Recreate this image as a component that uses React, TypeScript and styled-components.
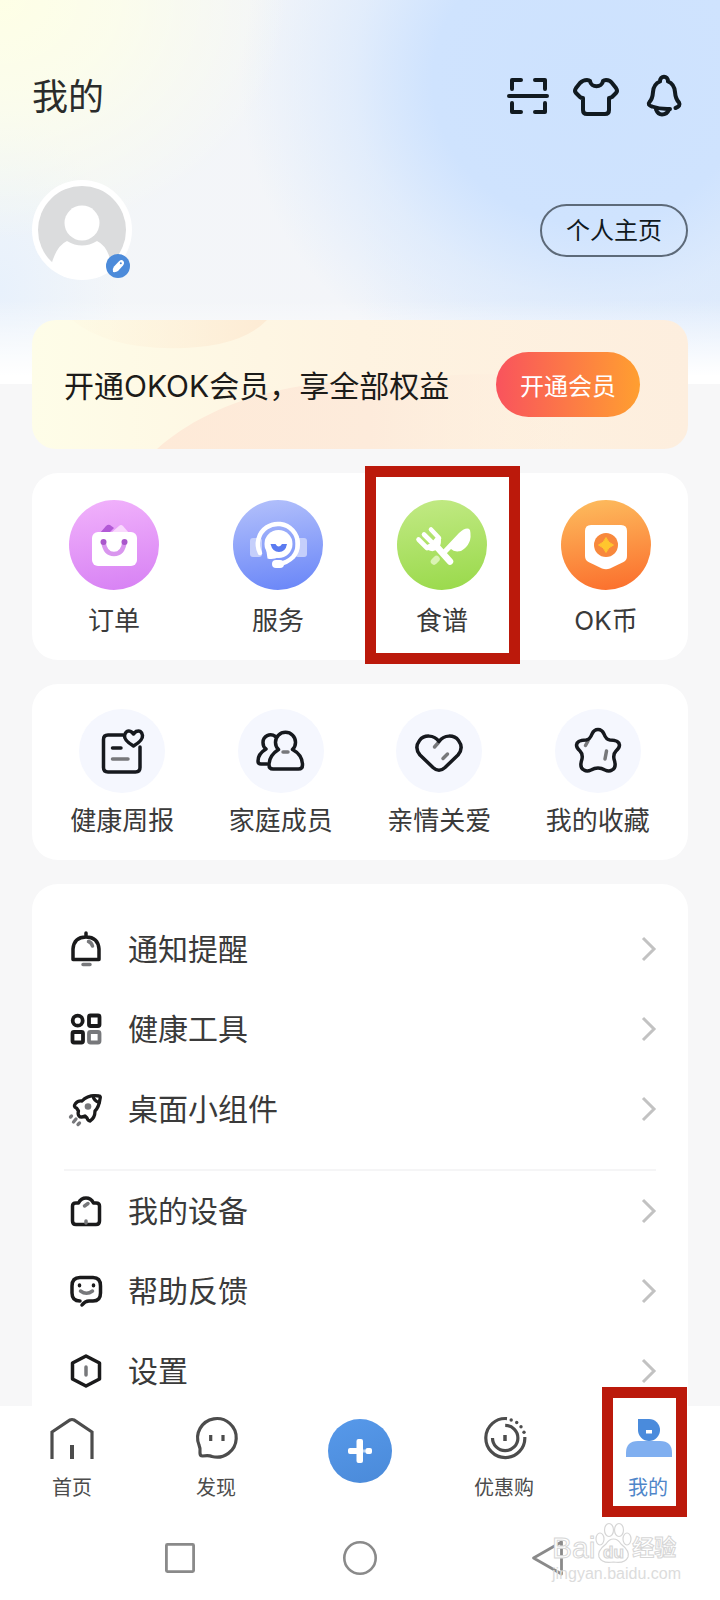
import React from 'react';
import styled, { createGlobalStyle } from 'styled-components';

const GlobalStyle = createGlobalStyle`
  * { box-sizing: border-box; }
  body {
    margin: 0;
    background: #ffffff;
    color: #3a3a3a;
    font-family: Inter, "Noto Sans CJK SC", sans-serif;
    -webkit-font-smoothing: antialiased;
  }
  button { font: inherit; color: inherit; border: 0; padding: 0; background: none; cursor: pointer; }
  a { color: inherit; text-decoration: none; }
  ul { list-style: none; margin: 0; padding: 0; }
  svg { display: block; overflow: visible; }
`;

const Shell = styled.div`
  display: flex;
  flex-direction: column;
  height: 100vh;
  position: relative;
`;

const Main = styled.main`
  flex: 1;
  min-height: 0;
  overflow-y: auto;
  scrollbar-width: none;
  padding: 73px 32px 0;
  background-color: #f7f7f8;
  background-repeat: no-repeat;
  background-size: 100% 384px;
  background-image:
    linear-gradient(to bottom, rgba(255, 255, 255, 0) 300px, #ffffff 376px),
    radial-gradient(ellipse 290px 240px at 0 0, #feffe6 0%, rgba(254, 255, 232, 0.75) 40%, rgba(250, 252, 240, 0) 100%),
    radial-gradient(ellipse 350px 320px at 82% 80px, #cde2fe 0%, #cfe3fe 45%, rgba(216, 232, 253, 0.65) 68%, rgba(240, 245, 251, 0) 100%),
    radial-gradient(ellipse 120px 180px at 0 290px, #e8f1fc 0%, rgba(243, 246, 250, 0) 100%),
    linear-gradient(90deg, #f3f6f8, #f3f5f9 50%, #e3edfb);
`;

const Header = styled.header`
  display: flex;
  align-items: center;
  justify-content: space-between;
`;

const Title = styled.h1`
  margin: 0;
  font-size: 36px;
  line-height: 48px;
  font-weight: 400;
  color: #2a2c2b;
`;

const Actions = styled.div`
  display: flex;
  gap: 20px;
  color: #111a20;
`;

const Profile = styled.section`
  display: flex;
  align-items: center;
  justify-content: space-between;
  margin-top: 59px;
`;

const AvatarButton = styled.button`
  position: relative;
  width: 100px;
  height: 100px;
`;

const EditBadge = styled.span`
  position: absolute;
  right: 2px;
  bottom: 2px;
`;

const OutlineButton = styled.button`
  height: 53px;
  padding: 2px 24px 0;
  border: 2px solid #5d6a79;
  border-radius: 27px;
  font-size: 24px;
  line-height: 36px;
  color: #101820;
`;

const Banner = styled.section`
  position: relative;
  display: flex;
  align-items: center;
  justify-content: space-between;
  margin-top: 40px;
  height: 129px;
  padding: 0 48px 0 32px;
  border-radius: 24px;
  overflow: hidden;
  background: linear-gradient(90deg, #fefde8, #fef3e1 50%, #fdeede);
`;

const BannerArt = styled.svg`
  position: absolute;
  left: 0;
  top: 0;
  width: 100%;
  height: 100%;
`;

const BannerText = styled.p`
  position: relative;
  margin: 0;
  padding-top: 2px;
  font-size: 30px;
  line-height: 40px;
  color: #1c1b19;
  white-space: nowrap;
`;

const JoinButton = styled.button`
  position: relative;
  width: 144px;
  height: 65px;
  border-radius: 33px;
  background: linear-gradient(90deg, #f9535d, #ff9f30);
  color: #ffffff;
  font-size: 24px;
`;

const Card = styled.section`
  margin-top: 24px;
  border-radius: 26px;
  background: #ffffff;
`;

const Grid = styled.ul<{ $side: number }>`
  display: grid;
  grid-template-columns: repeat(4, 1fr);
  padding: 0 ${(p) => p.$side}px;
`;

const GridItem = styled.li`
  position: relative;
`;

const GridLink = styled.a<{ $top: number; $gap: number }>`
  display: flex;
  flex-direction: column;
  align-items: center;
  gap: ${(p) => p.$gap}px;
  padding: ${(p) => p.$top}px 0 21px;
  font-size: 26px;
  line-height: 36px;
  white-space: nowrap;
`;

const SoftDisc = styled.span`
  display: grid;
  place-items: center;
  width: 86px;
  height: 84px;
  border-radius: 50%;
  background: #f5f7fe;
  color: #16191e;
`;

const Marker = styled.span<{ $inset: string }>`
  position: absolute;
  inset: ${(p) => p.$inset};
  border: 11px solid #bb190b;
  pointer-events: none;
`;

const MenuCard = styled(Card)`
  padding: 25px 32px;
`;

const MenuGroup = styled.ul`
  & + & {
    margin-top: 20px;
    border-top: 2px solid #f5f5f6;
  }
`;

const MenuLink = styled.a`
  display: flex;
  align-items: center;
  height: 80px;
  padding-left: 4px;
  font-size: 30px;
  line-height: 40px;
  color: #1a1a1b;
`;

const MenuText = styled.span`
  flex: 1;
  padding-left: 24px;
  color: #3a3a3a;
`;

const TabBar = styled.nav`
  position: relative;
  display: grid;
  grid-template-columns: repeat(5, 1fr);
  height: 110px;
  background: #ffffff;
`;

const TabItem = styled.div`
  position: relative;
  display: flex;
  justify-content: center;
`;

const TabLink = styled.a<{ $active?: boolean }>`
  display: flex;
  flex-direction: column;
  align-items: center;
  gap: 12px;
  padding-top: 8px;
  font-size: 20px;
  line-height: 28px;
  color: ${(p) => (p.$active ? '#4f86c9' : '#4c4c4c')};
`;

const AddButton = styled.button`
  display: grid;
  place-items: center;
  width: 64px;
  height: 64px;
  margin-top: 13px;
  border-radius: 50%;
  background: linear-gradient(160deg, #5799ea, #4a8ad9);
`;

const SystemBar = styled.div`
  display: grid;
  grid-template-columns: repeat(3, 1fr);
  height: 84px;
  padding: 0 12.5%;
  background: #ffffff;
  color: #8a8a8a;
`;

const SystemButton = styled.button`
  display: grid;
  place-items: center;
`;

const Watermark = styled.div`
  position: absolute;
  right: 38px;
  bottom: 16px;
  width: 130px;
  color: #ffffff;
  font-family: "Liberation Sans", "Noto Sans CJK SC", sans-serif;
  pointer-events: none;
`;

const WatermarkBrand = styled.div`
  display: flex;
  align-items: flex-end;
  height: 42px;
  font-size: 30px;
  line-height: 32px;
  white-space: nowrap;
  -webkit-text-stroke: 1px #d6d6d6;
`;

const WatermarkCn = styled.span`
  font-size: 22px;
  font-weight: 700;
`;

const WatermarkSite = styled.div`
  font-size: 16px;
  line-height: 20px;
  color: #dcdcdc;
  white-space: nowrap;
`;

type LineProps = { size?: number; width?: number; children: React.ReactNode };

const Line = ({ size = 48, width = 4, children }: LineProps) => (
  <svg
    width={size}
    height={size}
    viewBox={`0 0 ${size} ${size}`}
    fill="none"
    stroke="currentColor"
    strokeWidth={width}
    strokeLinecap="round"
    strokeLinejoin="round"
    aria-hidden="true"
  >
    {children}
  </svg>
);

const SOFT = '#77787b';

const ScanIcon = () => (
  <Line>
    <path d="M8 16V7h9M31 7h10v9M8 30v9h9M31 39h10v-9M5 23h38" />
  </Line>
);

const ShirtIcon = () => (
  <Line>
    <path d="M18 8C19 15 30 15 31 8Q32 7 34 7Q38 7 40 10L44 15Q46 18 44 20L40 24Q38 25 37 25V37Q37 41 33 41H15Q11 41 11 37V25Q9 25 8 24L4 20Q2 18 4 15L8 10Q11 7 15 7Q17 7 18 8Z" />
  </Line>
);

const BellIcon = () => (
  <Line>
    <path d="M30 36Q20 36.500 12 33.500Q7 32 9.500 29Q12.500 26 13 19C13.500 12.500 16 10 20 8.500C20 2 28 2 28 8.500C32 10 34.500 13 35 19Q35.500 26 39 29.500Q41 33 35.500 35" />
    <path d="M16 36.500Q18 41.500 22 41.500Q27 41.500 29 36.500" />
  </Line>
);

const Avatar = () => (
  <svg width="100" height="100" viewBox="0 0 100 100" aria-hidden="true">
    <circle cx="50" cy="50" r="50" fill="#fff" />
    <circle cx="50" cy="50" r="44" fill="#dbdcdd" />
    <circle cx="50" cy="43" r="17.500" fill="#fff" />
    <path d="M19 86Q24 66 35 61Q50 70 65 61Q76 66 80 86Q66 99 50 99Q33 99 19 86Z" fill="#fff" />
  </svg>
);

const EditIcon = () => (
  <svg width="24" height="24" viewBox="0 0 24 24" aria-hidden="true">
    <circle cx="12" cy="12" r="12" fill="#4c8bda" />
    <path d="M7 18Q6 15 8 12.500L13 7.300Q15.500 5 17.300 7Q19 9 17 11.500L12 17Q10 18.500 7 18Z" fill="#fff" />
    <circle cx="14.800" cy="9.300" r="1" fill="#4c8bda" />
  </svg>
);

type DiscProps = { id: string; from: string; to: string; children: React.ReactNode };

const ColorDisc = ({ id, from, to, children }: DiscProps) => (
  <svg width="90" height="90" viewBox="0 0 90 90" fill="none" aria-hidden="true">
    <defs>
      <linearGradient id={id} x1="0.400" y1="0" x2="0.550" y2="1">
        <stop offset="0" stopColor={from} />
        <stop offset="1" stopColor={to} />
      </linearGradient>
    </defs>
    <circle cx="45" cy="45" r="45" fill={`url(#${id})`} />
    {children}
  </svg>
);

const OrderIcon = () => (
  <ColorDisc id="order" from="#f0b0fb" to="#d883f4">
    <path d="M31 33L37 26Q39 24 41 25L45 28L40 33Z" fill="#b259d6" />
    <path d="M42 33L50 26Q52 24 54 26L60 33Z" fill="#f9d9fd" />
    <rect x="23" y="32" width="45" height="34" rx="6" fill="#fff" />
    <path d="M34.500 42Q36 54 45 54Q54 54 55.500 42" stroke="#d996ee" strokeWidth="4.500" />
    <circle cx="34.500" cy="42" r="3" fill="#a957cb" />
    <circle cx="55.500" cy="42" r="3" fill="#a957cb" />
  </ColorDisc>
);

const ServiceIcon = () => (
  <ColorDisc id="service" from="#b0befb" to="#6c88f8">
    <rect x="17" y="38" width="12" height="19" rx="3" fill="#c5cffb" />
    <rect x="62" y="38" width="12" height="19" rx="3" fill="#c5cffb" />
    <path d="M27 53A20 20 0 1 1 60 57Q54 63 46 64" stroke="#fff" strokeWidth="4.500" strokeLinecap="round" />
    <rect x="39" y="60" width="12" height="8" rx="4" fill="#fff" />
    <circle cx="45.500" cy="44" r="14" fill="#fff" />
    <path d="M33 48L34.500 58.500Q40 60 46 57Z" fill="#fff" />
    <path d="M37.500 44H42.500Q45.500 49 49 44H54Q52.500 52 46 52Q39.500 52 37.500 44Z" fill="#5b7bf0" />
  </ColorDisc>
);

const RecipeIcon = () => (
  <ColorDisc id="recipe" from="#c0e982" to="#9bda4d">
    <path d="M37 61.500L39.500 59" stroke="#daf3b4" strokeWidth="6.500" strokeLinecap="round" />
    <path d="M45 51L62 33Q70 26 73 30Q76 44 64 51Q57 52.500 54 49L48 55Z" fill="#fff" />
    <path d="M21.500 39.500L30 48M27 34.500L35 42.500M34 29.500L42 38" stroke="#fff" strokeWidth="4.600" strokeLinecap="round" />
    <path d="M28 46L34 43L40 36L43.500 37Q45 43 42 48Q37 53 31 50Z" fill="#fff" />
    <path d="M40 47L53 61.500" stroke="#fff" strokeWidth="6.500" strokeLinecap="round" />
  </ColorDisc>
);

const CoinIcon = () => (
  <ColorDisc id="coin" from="#fdb95c" to="#fb712e">
    <path d="M30 25H60Q66 25 66 31V56Q66 60 62.500 62L49 68.500Q45 70 41 68.500L27.500 62Q24 60 24 56V31Q24 25 30 25Z" fill="#fff" />
    <circle cx="45" cy="45" r="12" fill="#f8883c" />
    <path d="M45 37.500Q47 43 52.500 45Q47 47 45 52.500Q43 47 37.500 45Q43 43 45 37.500Z" fill="#ffc62e" stroke="#ffc62e" strokeWidth="1" strokeLinejoin="round" />
  </ColorDisc>
);

const ReportIcon = () => (
  <Line width={3.5}>
    <path d="M25 8H10Q5.500 8 5.500 12.500V40.500Q5.500 45 10 45H37.500Q42 45 42 40.500V20" />
    <path d="M35.500 19Q26 13.500 26.500 8.500Q28 2.500 33 4.500L35.500 7L38 4.500Q43.500 2.500 44.500 8.500Q45 13.500 35.500 19Z" />
    <path d="M14.500 21H23" />
    <path d="M14.500 32H30" stroke={SOFT} />
  </Line>
);

const FamilyIcon = () => (
  <Line width={3.5}>
    <path d="M18.500 9.500C13 5.500 6 9 6 15.500Q6 20 9 22C4 25 1 30 1 34Q1 37 4 37H10" />
    <path d="M21.500 22.500A10 10 0 1 1 35.500 22.500C42 26 45.500 32 45.500 38Q45.500 42 41.500 42H16Q12 42 12 38C12 32 16 26 21.500 22.500Z" />
    <path d="M26 25H31" stroke={SOFT} />
  </Line>
);

const HeartIcon = () => (
  <Line width={3.5}>
    <path d="M23.500 15.500L19.500 20M32.500 27L28 31.500" stroke={SOFT} />
    <path d="M24 14.500C19 7.500 9 7.500 4.500 13.500Q-1 21 5 28L18 40.500Q24 46 30 40.500L43 28Q49 21 43.500 13.500C39 7.500 29 7.500 24 14.500Z" />
  </Line>
);

const StarIcon = () => (
  <Line width={3.5}>
    <path d="M14 14L11.500 18.500M32.500 24L31 32" stroke={SOFT} />
    <path d="M24 2.500Q28 2.500 30 7Q32 12.500 36 13Q45 13 45.500 18Q45.500 21 42 24Q39 27 40 32Q43 41 38 43Q35 45 31 43Q24 39 17 43Q13 45 10 43Q5 41 8 32Q9 27 6 24Q2.500 21 2.500 18Q3 13 12 13Q16 12.500 18 7Q20 2.500 24 2.500Z" />
  </Line>
);

const ReminderIcon = () => (
  <Line size={36} width={3.5}>
    <path d="M5 28.500V18Q6 6 18 6Q30 6 31 18V28.500ZM18 2V5" />
    <path d="M20.500 10.500Q23.500 11.500 24.500 15M15 33.500H22" stroke={SOFT} />
  </Line>
);

const ToolsIcon = () => (
  <Line size={36} width={3.8}>
    <circle cx="9.700" cy="9.700" r="5" />
    <rect x="21" y="4.500" width="10.500" height="10.500" rx="1.500" />
    <rect x="4.500" y="21" width="10.500" height="10.500" rx="1.500" />
    <rect x="21" y="21" width="10.500" height="10.500" rx="1.500" stroke={SOFT} />
  </Line>
);

const RocketIcon = () => (
  <Line size={36} width={3.3}>
    <path d="M31 5Q33 5 32 8Q31 16 27 20Q27 27 22 30Q20 30 19 27L17 25Q13 27 11 25Q9.500 23 10.500 20L8.500 17Q5 16 7.500 12.500Q10 9.500 14 10Q20 3.500 31 5Z" />
    <path d="M25 5Q26 10 31 11.500" />
    <circle cx="20" cy="15.500" r="3.300" fill={SOFT} stroke="none" />
    <path d="M2.500 26L3.500 25M5.500 31L8 28M10 33.500L11.500 32" stroke={SOFT} />
  </Line>
);

const DeviceIcon = () => (
  <Line size={36} width={3.5}>
    <path d="M10.500 10H8Q4.500 10 4.500 13V28Q4.500 31.500 8 31.500H28Q31.500 31.500 31.500 28V13Q31.500 10 28 10H25.500Q23 5 18 5Q13 5 10.500 10Z" />
    <path d="M16.500 13L20 10.500M18 28V30" stroke={SOFT} />
  </Line>
);

const FeedbackIcon = () => (
  <Line size={36} width={3.5}>
    <path d="M12 28Q4 28 4 20V13Q4 4.500 12 4.500H25Q32.500 4.500 32.500 13V20Q32.500 28 25 28H21Q17 28 14 32" />
    <path d="M11.500 12V12.800M25.500 12V12.800" />
    <path d="M12.500 18Q18.500 22.500 24.500 18" stroke={SOFT} />
  </Line>
);

const SettingsIcon = () => (
  <Line size={36} width={3.5}>
    <path d="M18 3L31.500 10V26L18 33L4.500 26V10Z" />
    <path d="M18 14V22" stroke={SOFT} />
  </Line>
);

const Chevron = () => (
  <svg width="16" height="24" viewBox="0 0 16 24" fill="none" stroke="#c2c2c2" strokeWidth="3" aria-hidden="true">
    <path d="M3 1L14 12L3 23" />
  </svg>
);

const HomeTabIcon = () => (
  <svg width="48" height="48" viewBox="0 0 48 48" fill="none" stroke="#4c4c4c" strokeWidth="3.200" aria-hidden="true">
    <path d="M4 45V18L22 6Q24 5 26 6L44 18V45" />
    <path d="M24 31V45" strokeWidth="4" />
  </svg>
);

const DiscoverTabIcon = () => (
  <svg width="48" height="48" viewBox="0 0 48 48" fill="none" stroke="#4c4c4c" strokeWidth="3.200" aria-hidden="true">
    <path d="M7 31A19.300 19.300 0 1 1 20 42.500Q17 41 10.500 42Q8 42 8 39Q8.500 34 7 31Z" />
    <path d="M18.700 21V27M31 21V27" />
  </svg>
);

const DealsTabIcon = () => (
  <svg width="48" height="48" viewBox="0 0 48 48" fill="none" stroke="#4c4c4c" strokeWidth="3.200" aria-hidden="true">
    <path d="M27 4.600A19.500 19.500 0 1 0 44.800 23" />
    <path d="M12.500 24A12.700 12.700 0 1 0 25.200 11.300" />
    <path d="M25 21V27" strokeWidth="3.500" />
    <g fill="#4c4c4c" stroke="none">
      <circle cx="31.200" cy="6" r="1.700" />
      <circle cx="36.700" cy="8.500" r="1.700" />
      <circle cx="41" cy="12.700" r="1.700" />
      <circle cx="44" cy="18.300" r="1.700" />
    </g>
  </svg>
);

const MineTabIcon = () => (
  <svg width="48" height="48" viewBox="0 0 48 48" aria-hidden="true">
    <path d="M2 43V39Q2 27 14 27H36Q48 27 48 39V43Z" fill="#80aff0" />
    <path d="M14 5H25A11 11 0 1 1 14 16Z" fill="#4a8bdc" />
    <rect x="22" y="16" width="6" height="3.500" fill="#fff" />
  </svg>
);

const PlusIcon = () => (
  <svg width="24" height="24" viewBox="0 0 24 24" fill="#fff" aria-hidden="true">
    <rect x="8.500" y="0" width="6.500" height="24" rx="2" />
    <rect x="0" y="9" width="11" height="6" rx="2" />
    <rect x="15" y="10.500" width="4" height="3" opacity="0.600" />
    <rect x="17.500" y="9" width="6.500" height="6" rx="2" />
  </svg>
);

const Paw = () => (
  <svg width="37" height="42" viewBox="0 0 37 42" fill="#fff" stroke="#d6d6d6" strokeWidth="1.200" aria-hidden="true">
    <ellipse cx="5" cy="17" rx="4" ry="6" />
    <ellipse cx="14" cy="8" rx="4.500" ry="6.500" />
    <ellipse cx="24" cy="8" rx="4.500" ry="6.500" />
    <ellipse cx="32" cy="17" rx="4" ry="6" />
    <path d="M18.500 17Q23 17 26 22Q35 29 33 35Q30 42 18.500 40Q7 42 4 35Q2 29 11 22Q14 17 18.500 17Z" />
    <text x="18.500" y="36" textAnchor="middle" fontSize="17" fontWeight="700">du</text>
  </svg>
);

const shortcuts = [
  { label: '订单', Icon: OrderIcon },
  { label: '服务', Icon: ServiceIcon },
  { label: '食谱', Icon: RecipeIcon, marked: true },
  { label: 'OK币', Icon: CoinIcon },
];

const features = [
  { label: '健康周报', Icon: ReportIcon },
  { label: '家庭成员', Icon: FamilyIcon },
  { label: '亲情关爱', Icon: HeartIcon },
  { label: '我的收藏', Icon: StarIcon },
];

const menus = [
  [
    { label: '通知提醒', Icon: ReminderIcon },
    { label: '健康工具', Icon: ToolsIcon },
    { label: '桌面小组件', Icon: RocketIcon },
  ],
  [
    { label: '我的设备', Icon: DeviceIcon },
    { label: '帮助反馈', Icon: FeedbackIcon },
    { label: '设置', Icon: SettingsIcon },
  ],
];

export default function App() {
  return (
    <Shell>
      <GlobalStyle />
      <Main>
        <Header>
          <Title>我的</Title>
          <Actions>
            <button type="button" aria-label="扫一扫"><ScanIcon /></button>
            <button type="button" aria-label="皮肤"><ShirtIcon /></button>
            <button type="button" aria-label="消息"><BellIcon /></button>
          </Actions>
        </Header>

        <Profile>
          <AvatarButton type="button" aria-label="编辑头像">
            <Avatar />
            <EditBadge><EditIcon /></EditBadge>
          </AvatarButton>
          <OutlineButton type="button">个人主页</OutlineButton>
        </Profile>

        <Banner>
          <BannerArt viewBox="0 0 656 128" preserveAspectRatio="none" aria-hidden="true">
            <defs>
              <linearGradient id="cap" x1="0" x2="1">
                <stop offset="0" stopColor="#fdf3dc" stopOpacity="0.200" />
                <stop offset="1" stopColor="#fdebd4" />
              </linearGradient>
              <linearGradient id="hill" x1="0" x2="1">
                <stop offset="0" stopColor="#feead8" />
                <stop offset="0.400" stopColor="#fdebdb" />
                <stop offset="0.800" stopColor="#fdeede" stopOpacity="0" />
              </linearGradient>
            </defs>
            <path d="M40 0Q75 28 140 28Q208 28 235 0Z" fill="url(#cap)" />
            <path d="M125 128C165 92 235 62 330 60C400 58 430 50 500 56L656 80V128Z" fill="url(#hill)" />
          </BannerArt>
          <BannerText>开通OKOK会员，享全部权益</BannerText>
          <JoinButton type="button">开通会员</JoinButton>
        </Banner>

        <Card>
          <Grid $side={0}>
            {shortcuts.map(({ label, Icon, marked }) => (
              <GridItem key={label}>
                <GridLink href="#" $top={27} $gap={13}>
                  <Icon />
                  {label}
                </GridLink>
                {marked && <Marker $inset="-7px 4px -4px 5px" />}
              </GridItem>
            ))}
          </Grid>
        </Card>

        <Card>
          <Grid $side={11}>
            {features.map(({ label, Icon }) => (
              <GridItem key={label}>
                <GridLink href="#" $top={25} $gap={10}>
                  <SoftDisc><Icon /></SoftDisc>
                  {label}
                </GridLink>
              </GridItem>
            ))}
          </Grid>
        </Card>

        <MenuCard>
          {menus.map((group) => (
            <MenuGroup key={group[0].label}>
              {group.map(({ label, Icon }) => (
                <li key={label}>
                  <MenuLink href="#">
                    <Icon />
                    <MenuText>{label}</MenuText>
                    <Chevron />
                  </MenuLink>
                </li>
              ))}
            </MenuGroup>
          ))}
        </MenuCard>
      </Main>

      <TabBar>
        <TabItem><TabLink href="#"><HomeTabIcon />首页</TabLink></TabItem>
        <TabItem><TabLink href="#"><DiscoverTabIcon />发现</TabLink></TabItem>
        <TabItem><AddButton type="button" aria-label="添加"><PlusIcon /></AddButton></TabItem>
        <TabItem><TabLink href="#"><DealsTabIcon />优惠购</TabLink></TabItem>
        <TabItem>
          <TabLink href="#" $active aria-current="page"><MineTabIcon />我的</TabLink>
          <Marker $inset="-19px 33px -1px 26px" />
        </TabItem>
      </TabBar>

      <SystemBar>
        <SystemButton type="button" aria-label="最近任务">
          <svg width="30" height="30" viewBox="0 0 30 30" fill="none" stroke="currentColor" strokeWidth="2.800" aria-hidden="true">
            <rect x="1.400" y="1.400" width="27.200" height="27.200" rx="1" />
          </svg>
        </SystemButton>
        <SystemButton type="button" aria-label="主屏幕">
          <svg width="34" height="34" viewBox="0 0 34 34" fill="none" stroke="currentColor" strokeWidth="2.600" aria-hidden="true">
            <circle cx="17" cy="17" r="15.700" />
          </svg>
        </SystemButton>
        <SystemButton type="button" aria-label="返回">
          <svg width="48" height="36" viewBox="0 0 48 36" fill="none" stroke="currentColor" strokeWidth="2.800" strokeLinejoin="round" aria-hidden="true">
            <path d="M17.500 18L45.500 2V34Z" />
          </svg>
        </SystemButton>
      </SystemBar>

      <Watermark>
        <WatermarkBrand>
          Bai
          <Paw />
          <WatermarkCn>经验</WatermarkCn>
        </WatermarkBrand>
        <WatermarkSite>jingyan.baidu.com</WatermarkSite>
      </Watermark>
    </Shell>
  );
}
